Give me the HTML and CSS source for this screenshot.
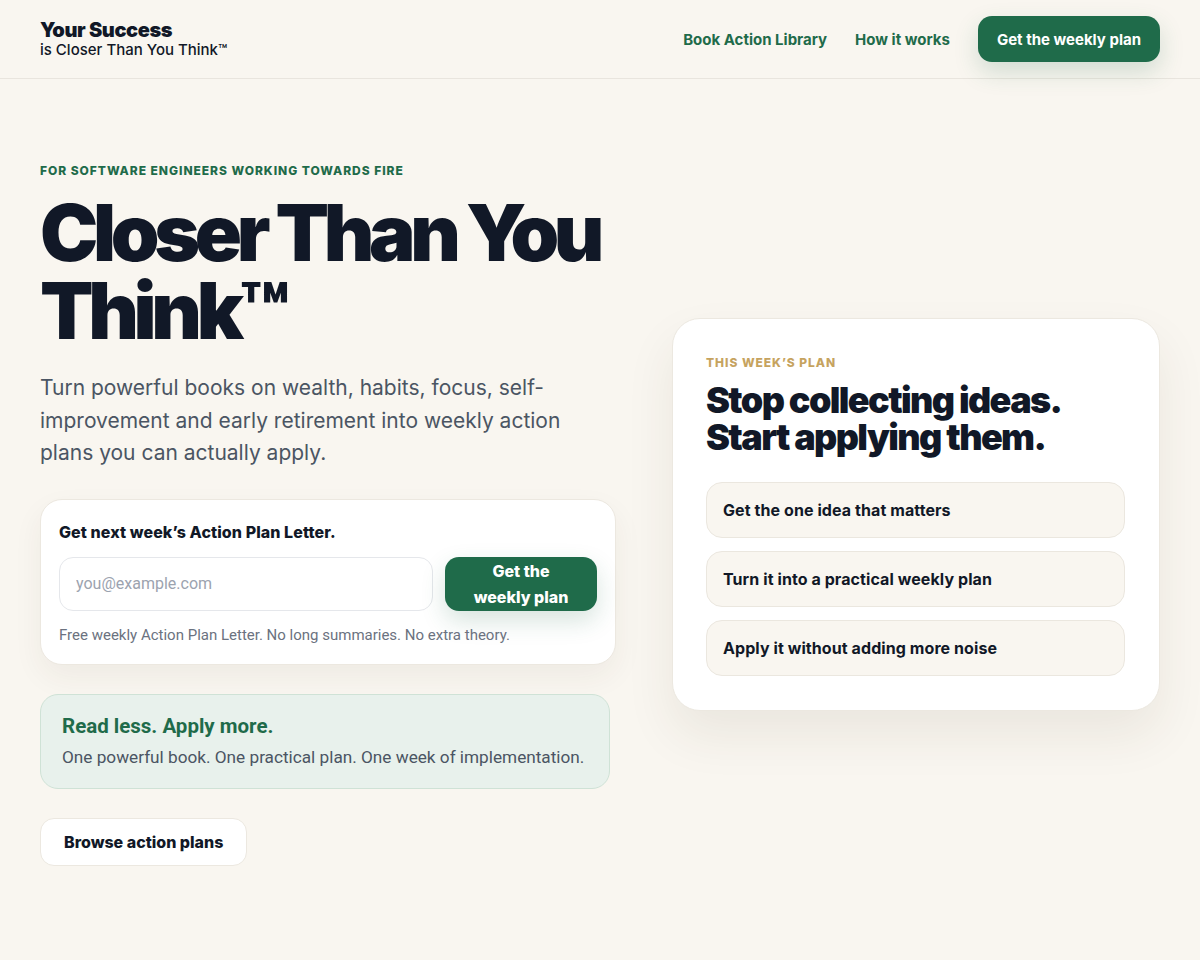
FILE: index.html
```html
<!DOCTYPE html>
<html lang="en">
<head>
    <meta charset="UTF-8">
    <meta name="viewport" content="width=device-width, initial-scale=1.0">
    <title>Your Success is Closer Than You Think</title>
    <link rel="stylesheet" href="styles.css">
</head>
<body>
    <header class="site-header">
        <a class="brand" href="#">
            <span class="brand-title">Your Success</span>
            <span class="brand-sub">is Closer Than You Think™</span>
        </a>
        <nav class="nav">
            <a href="#library">Book Action Library</a>
            <a href="#how">How it works</a>
            <a class="btn btn-primary nav-cta" href="#signup">Get the weekly plan</a>
        </nav>
    </header>

    <main class="hero">
        <div class="hero-copy">
            <p class="eyebrow">For software engineers working towards FIRE</p>
            <h1>Closer Than You Think™</h1>
            <p class="lead">Turn powerful books on wealth, habits, focus, self-improvement and early retirement into weekly action plans you can actually apply.</p>

            <form class="signup" id="signup" onsubmit="return false">
                <label class="signup-title" for="email">Get next week’s Action Plan Letter.</label>
                <div class="signup-row">
                    <input id="email" type="email" placeholder="you@example.com">
                    <button class="btn btn-primary" type="submit">Get the weekly plan</button>
                </div>
                <p class="signup-note">Free weekly Action Plan Letter. No long summaries. No extra theory.</p>
            </form>

            <div class="callout">
                <h3>Read less. Apply more.</h3>
                <p>One powerful book. One practical plan. One week of implementation.</p>
            </div>

            <a class="btn btn-ghost" href="#library">Browse action plans</a>
        </div>

        <aside class="plan-card">
            <p class="eyebrow gold">This week’s plan</p>
            <h2>Stop collecting ideas. Start applying them.</h2>
            <ul class="steps">
                <li>Get the one idea that matters</li>
                <li>Turn it into a practical weekly plan</li>
                <li>Apply it without adding more noise</li>
            </ul>
        </aside>
    </main>
</body>
</html>
```

FILE: styles.css
```css
* {
    box-sizing: border-box;
}
body {
    margin: 0;
    background: #f9f6f0;
    color: #111827;
    font-family: Inter, "Noto Sans", sans-serif;
}
a {
    text-decoration: none;
    color: inherit;
}

/* header */
.site-header {
    height: 79px;
    padding: 0 40px;
    display: flex;
    align-items: center;
    justify-content: space-between;
    border-bottom: 1px solid #e9e5de;
}
.brand {
    display: flex;
    flex-direction: column;
}
.brand-title {
    font-size: 20px;
    font-weight: 900;
    letter-spacing: -0.02em;
    line-height: 22px;
    color: #111827;
}
.brand-sub {
    font-size: 15px;
    font-weight: 500;
    line-height: 18px;
}
.nav {
    display: flex;
    align-items: center;
    gap: 28px;
}
.nav a {
    font-size: 15px;
    font-weight: 700;
    color: #1f6b4a;
}
.btn {
    display: inline-flex;
    align-items: center;
    justify-content: center;
    border: none;
    border-radius: 14px;
    font-family: inherit;
    font-size: 15px;
    font-weight: 700;
    cursor: pointer;
}
.btn-primary {
    background: #1f6b4a;
    color: #fff;
    box-shadow: 0 10px 24px rgba(31, 107, 74, 0.18);
}
.nav .nav-cta {
    color: #fff;
    height: 46px;
    padding: 0 19px;
}

/* hero */
.hero {
    display: grid;
    grid-template-columns: 576px 1fr;
    gap: 56px;
    align-items: center;
    padding: 84px 40px 96px;
}
.eyebrow {
    margin: 0;
    font-size: 12px;
    font-weight: 800;
    letter-spacing: 0.08em;
    text-transform: uppercase;
    color: #1f6b4a;
}
.eyebrow.gold {
    color: #c6a35f;
}
h1 {
    margin: 16px 0 0;
    font-size: 78px;
    line-height: 78px;
    font-weight: 900;
    letter-spacing: -0.068em;
    max-width: 570px;
}
.lead {
    margin: 22px 0 0;
    font-size: 21px;
    line-height: 32.5px;
    color: #4b5563;
    max-width: 540px;
}

.signup {
    margin-top: 29px;
    background: #fff;
    border: 1px solid #ece8e0;
    border-radius: 22px;
    padding: 22px 18px 20px;
    box-shadow: 0 12px 30px rgba(60, 50, 30, 0.06);
}
.signup-title {
    display: block;
    font-size: 16px;
    font-weight: 800;
    letter-spacing: 0.005em;
}
.signup-row {
    display: flex;
    gap: 12px;
    margin-top: 15px;
}
.signup-row input {
    flex: 1;
    height: 54px;
    border: 1px solid #e5e7eb;
    border-radius: 14px;
    padding: 0 16px;
    font-family: Roboto, sans-serif;
    font-size: 16px;
    color: #111827;
}
.signup-row input::placeholder {
    color: #9ca3af;
}
.signup-row .btn {
    width: 152px;
    height: 54px;
    font-size: 16px;
    font-weight: 800;
    line-height: 26px;
    padding: 0 22px;
    text-align: center;
}
.signup-note {
    margin: 15px 0 0;
    font-family: Roboto, sans-serif;
    font-size: 15px;
    color: #6b7280;
}

.callout {
    margin-top: 29px;
    width: 570px;
    background: #e8f1ec;
    border: 1px solid #cfe2d6;
    border-radius: 18px;
    padding: 19px 21px 21px;
    font-family: Roboto, sans-serif;
}
.callout h3 {
    margin: 0;
    font-size: 20.5px;
    font-weight: 700;
    color: #1f6b4a;
}
.callout p {
    margin: 9px 0 0;
    font-size: 17.2px;
    color: #4b5563;
}

.btn-ghost {
    margin-top: 29px;
    height: 48px;
    padding: 0 23px;
    background: #fff;
    border: 1px solid #ece8e0;
    font-size: 16px;
    font-weight: 800;
    color: #111827;
}

/* right card */
.plan-card {
    background: #fff;
    border: 1px solid #ece8e0;
    border-radius: 28px;
    padding: 36px 34px 34px 33px;
    box-shadow: 0 24px 50px rgba(60, 50, 30, 0.08);
}
h2 {
    margin: 12px 0 0;
    font-size: 36px;
    line-height: 37px;
    font-weight: 900;
    letter-spacing: -0.045em;
}
.steps {
    list-style: none;
    margin: 26px 0 0;
    padding: 0;
    display: flex;
    flex-direction: column;
    gap: 13px;
}
.steps li {
    height: 56px;
    display: flex;
    align-items: center;
    padding: 0 16px;
    background: #f9f6f0;
    border: 1px solid #ebe7df;
    border-radius: 16px;
    font-size: 16px;
    font-weight: 700;
    letter-spacing: 0.005em;
}
```
